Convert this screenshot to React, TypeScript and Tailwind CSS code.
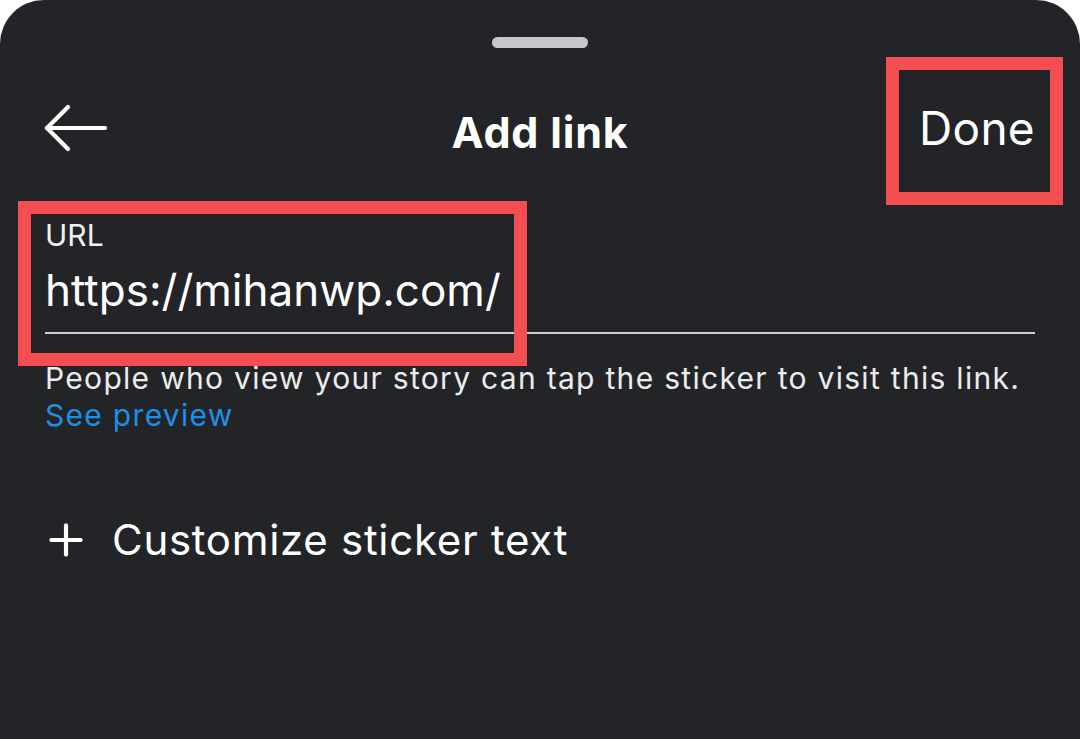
import { Plus } from "lucide-react";

const font = { fontFamily: "Inter, Roboto, 'Liberation Sans', sans-serif" };

function BackArrow() {
    return (
        <svg width="64" height="48" viewBox="0 0 64 48" fill="none" stroke="currentColor" strokeWidth="4.2" strokeLinecap="round" strokeLinejoin="round">
            <path d="M3 24 H61" />
            <path d="M24 3 L3 24 L24 45" />
        </svg>
    );
}

export default function App() {
    return (
        <div className="w-[1080px] h-[739px] bg-white overflow-hidden" style={font}>
            <div className="relative h-full bg-[#232428] rounded-t-[44px] text-white">
                {/* drag handle */}
                <div className="flex justify-center pt-[37px]">
                    <div className="w-[96px] h-[11px] rounded-full bg-[#c7c8cb]" />
                </div>

                {/* header */}
                <div className="grid grid-cols-[1fr_auto_1fr] items-start mt-[52px] pl-[45px] pr-[45px]">
                    <div className="mt-[4px] -ml-[1px]"><BackArrow /></div>
                    <div className="text-[43px] leading-[56px] font-bold tracking-[0.8px] mt-[4px]">Add link</div>
                    <div className="justify-self-end text-[46px] leading-[56px] tracking-[0.3px]">Done</div>
                </div>

                {/* url field */}
                <div className="px-[45px] mt-[57px]">
                    <div className="text-[30px] leading-[36px] text-[#f1f1f1]">URL</div>
                    <div className="text-[44px] leading-[56px] mt-[9px]">https://mihanwp.com/</div>
                    <div className="h-[2px] bg-[#cfd0d2] mt-[14px]" />
                    <div className="text-[30px] leading-[37px] tracking-[1.3px] mt-[26px] text-[#ececec] whitespace-nowrap">
                        People who view your story can tap the sticker to visit this link.
                    </div>
                    <div className="text-[30px] leading-[37px] tracking-[1.3px] text-[#1f8fe5]">See preview</div>
                </div>

                {/* customize */}
                <div className="flex items-center gap-[21px] px-[45px] mt-[78px]">
                    <Plus size={50} strokeWidth={2} className="-ml-[4px]" />
                    <span className="text-[42px] leading-[56px] tracking-[0.7px]">Customize sticker text</span>
                </div>

                {/* annotation boxes */}
                <div className="absolute left-[886px] top-[57px] w-[177px] h-[148px] border-[13px] border-[#f44d52]" />
                <div className="absolute left-[18px] top-[201px] w-[509px] h-[165px] border-[13px] border-[#f44d52]" />
            </div>
        </div>
    );
}
